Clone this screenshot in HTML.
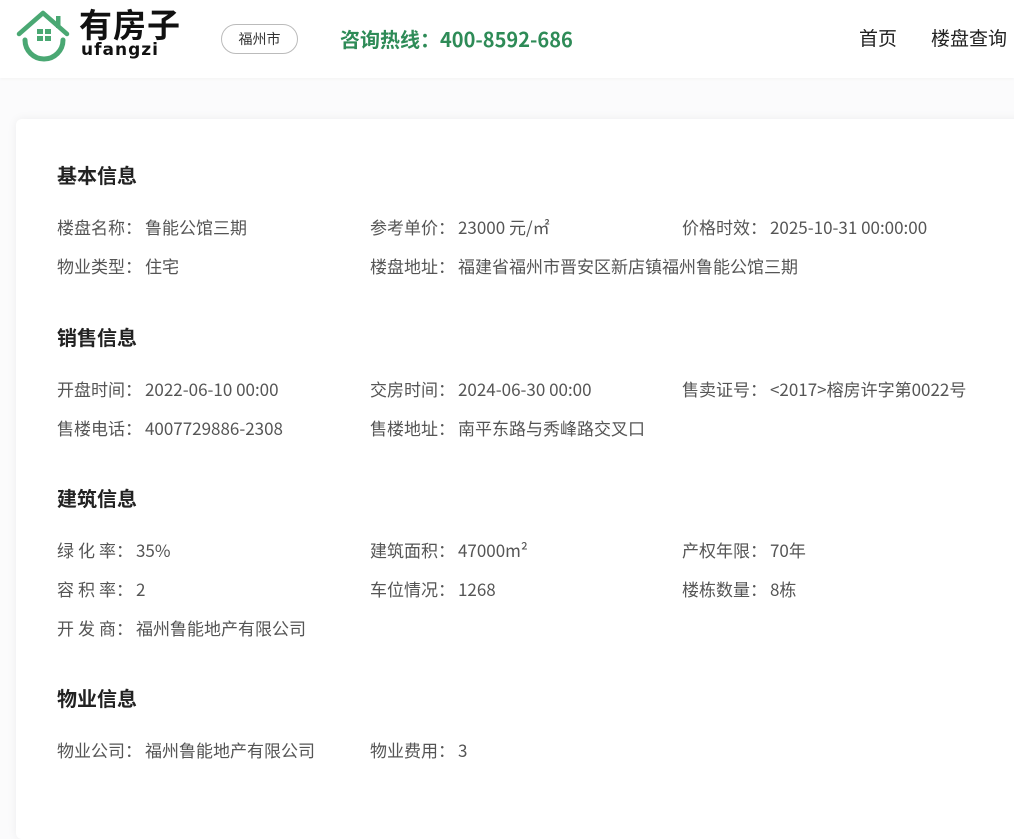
<!DOCTYPE html>
<html><head><meta charset="utf-8"><style>
body{margin:0;width:1014px;height:814px;overflow:hidden;background:#fbfbfc;font-family:"Noto Sans CJK SC","Liberation Sans",sans-serif;position:relative}
.hdr{position:absolute;left:0;top:0;width:1014px;height:78px;background:#fff;box-shadow:0 1px 3px rgba(0,0,0,.04)}
.card{position:absolute;left:16px;top:119px;width:1010px;height:720px;background:#fff;border-radius:6px;box-shadow:0 0 10px rgba(0,0,0,.06)}
.t{position:absolute;white-space:nowrap}
.h{font-size:20px;font-weight:bold;color:#222;left:57px;line-height:24px}
.r{font-size:17px;color:#555;line-height:22px}
.r b{font-weight:normal;margin-left:3px}
.s{display:inline-block;width:4px}
</style></head><body>
<div class="hdr">
<svg style="position:absolute;left:16px;top:9px" width="56" height="56" viewBox="0 0 56 56">
<path d="M3 25 L27 4 L51 25" fill="none" stroke="#4aa873" stroke-width="4.5" stroke-linecap="round" stroke-linejoin="round"/>
<rect x="40" y="7" width="4.5" height="12" fill="#4aa873"/>
<path d="M9 31 A19 19 0 0 0 47 31" fill="none" stroke="#4aa873" stroke-width="5" stroke-linecap="round"/>
<rect x="21" y="20" width="6" height="5" fill="#4aa873"/><rect x="29" y="20" width="6" height="5" fill="#4aa873"/>
<rect x="21" y="27" width="6" height="5" fill="#4aa873"/><rect x="29" y="27" width="6" height="5" fill="#4aa873"/>
</svg>
<div class="t" style="left:79px;top:4px;font-size:33px;font-weight:bold;color:#111;letter-spacing:1px;line-height:38px">有房子</div>
<div class="t" style="left:81px;top:39px;font-family:'DejaVu Sans',sans-serif;font-size:17px;font-weight:bold;color:#111;letter-spacing:1px;line-height:22px">ufangzi</div>
<div class="t" style="left:221px;top:24px;width:75px;height:28px;border:1px solid #bbb;border-radius:15px;font-size:14px;color:#333;text-align:center;line-height:28px">福州市</div>
<div class="t" style="left:340px;top:25px;font-size:20px;font-weight:bold;color:#2e8b57;line-height:28px">咨询热线：400-8592-686</div>
<div class="t" style="left:859px;top:24px;font-size:19px;color:#222;line-height:28px">首页</div>
<div class="t" style="left:931px;top:24px;font-size:19px;color:#222;line-height:28px">楼盘查询</div>
</div>
<div class="card"></div>
<div class="t h" style="top:163px">基本信息</div>
<div class="t r" style="left:57px;top:216px">楼盘名称：<b>鲁能公馆三期</b></div>
<div class="t r" style="left:370px;top:216px">参考单价：<b>23000 元/㎡</b></div>
<div class="t r" style="left:682px;top:216px">价格时效：<b>2025-10-31 00:00:00</b></div>
<div class="t r" style="left:57px;top:255px">物业类型：<b>住宅</b></div>
<div class="t r" style="left:370px;top:255px">楼盘地址：<b>福建省福州市晋安区新店镇福州鲁能公馆三期</b></div>
<div class="t h" style="top:325px">销售信息</div>
<div class="t r" style="left:57px;top:378px">开盘时间：<b>2022-06-10 00:00</b></div>
<div class="t r" style="left:370px;top:378px">交房时间：<b>2024-06-30 00:00</b></div>
<div class="t r" style="left:682px;top:378px">售卖证号：<b>&lt;2017&gt;榕房许字第0022号</b></div>
<div class="t r" style="left:57px;top:417px">售楼电话：<b>4007729886-2308</b></div>
<div class="t r" style="left:370px;top:417px">售楼地址：<b>南平东路与秀峰路交叉口</b></div>
<div class="t h" style="top:486px">建筑信息</div>
<div class="t r" style="left:57px;top:539px">绿<span class="s"></span>化<span class="s"></span>率：<b>35%</b></div>
<div class="t r" style="left:370px;top:539px">建筑面积：<b>47000m²</b></div>
<div class="t r" style="left:682px;top:539px">产权年限：<b>70年</b></div>
<div class="t r" style="left:57px;top:578px">容<span class="s"></span>积<span class="s"></span>率：<b>2</b></div>
<div class="t r" style="left:370px;top:578px">车位情况：<b>1268</b></div>
<div class="t r" style="left:682px;top:578px">楼栋数量：<b>8栋</b></div>
<div class="t r" style="left:57px;top:617px">开<span class="s"></span>发<span class="s"></span>商：<b>福州鲁能地产有限公司</b></div>
<div class="t h" style="top:686px">物业信息</div>
<div class="t r" style="left:57px;top:739px">物业公司：<b>福州鲁能地产有限公司</b></div>
<div class="t r" style="left:370px;top:739px">物业费用：<b>3</b></div>
</body></html>
